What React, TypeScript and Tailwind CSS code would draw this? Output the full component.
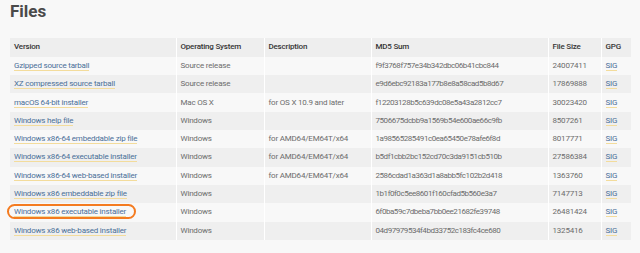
import React from "react";

type Row = {
  version: string;
  os: string;
  desc: string;
  md5: string;
  size: string;
  marked?: boolean;
};

const rows: Row[] = [
  { version: "Gzipped source tarball", os: "Source release", desc: "", md5: "f9f3768f757e34b342dbc06b41cbc844", size: "24007411" },
  { version: "XZ compressed source tarball", os: "Source release", desc: "", md5: "e9d6ebc92183a177b8e8a58cad5b8d67", size: "17869888" },
  { version: "macOS 64-bit installer", os: "Mac OS X", desc: "for OS X 10.9 and later", md5: "f12203128b5c639dc08e5a43a2812cc7", size: "30023420" },
  { version: "Windows help file", os: "Windows", desc: "", md5: "7506675dcbb9a1569b54e600ae66c9fb", size: "8507261" },
  { version: "Windows x86-64 embeddable zip file", os: "Windows", desc: "for AMD64/EM64T/x64", md5: "1a98565285491c0ea65450e78afe6f8d", size: "8017771" },
  { version: "Windows x86-64 executable installer", os: "Windows", desc: "for AMD64/EM64T/x64", md5: "b5df1cbb2bc152cd70c3da9151cb510b", size: "27586384" },
  { version: "Windows x86-64 web-based installer", os: "Windows", desc: "for AMD64/EM64T/x64", md5: "2586cdad1a363d1a8abb5fc102b2d418", size: "1363760" },
  { version: "Windows x86 embeddable zip file", os: "Windows", desc: "", md5: "1b1f0f0c5ee8601f160cfad5b560e3a7", size: "7147713" },
  { version: "Windows x86 executable installer", os: "Windows", desc: "", md5: "6f0ba59c7dbeba7bb0ee21682fe39748", size: "26481424", marked: true },
  { version: "Windows x86 web-based installer", os: "Windows", desc: "", md5: "04d97979534f4bd33752c183fc4ce680", size: "1325416" },
];

const Link: React.FC<{ children: React.ReactNode }> = ({ children }) => (
  <a href="#" className="text-[#4a6f99] border-b border-[#f3dc9c]">
    {children}
  </a>
);

const App: React.FC = () => {
  return (
    <div className="w-[640px] h-[253px] bg-[#f8f8f8] pl-[10px] pt-[1px] overflow-hidden font-['Roboto',sans-serif]">
      <h1 className="text-[17px] font-bold text-[#4a4a4a] leading-[20px] h-[37px]">Files</h1>
      <table className="table-fixed border-collapse w-[621px] text-[8px] text-[#6c6c6c] tracking-[-0.2px]">
        <colgroup>
          <col className="w-[166px]" />
          <col className="w-[88px]" />
          <col className="w-[107px]" />
          <col className="w-[177px]" />
          <col className="w-[53px]" />
          <col className="w-[30px]" />
        </colgroup>
        <thead>
          <tr className="h-[18.7px] bg-[#eeeeee] text-[#353535] text-left">
            <th className="font-medium px-[4px] border-r border-white">Version</th>
            <th className="font-medium px-[4px] border-x border-white">Operating System</th>
            <th className="font-medium px-[4px] border-x border-white">Description</th>
            <th className="font-medium px-[4px] border-x border-white">MD5 Sum</th>
            <th className="font-medium px-[4px] border-x border-white">File Size</th>
            <th className="font-medium px-[4px] border-l border-white">GPG</th>
          </tr>
        </thead>
        <tbody>
          {rows.map((r, i) => (
            <tr key={r.version} className={`h-[18.33px] ${i % 2 === 0 ? "bg-[#f8f8f8]" : "bg-[#efefef]"}`}>
              <td className="px-[4px] border-r border-white whitespace-nowrap">
                <span className="relative">
                  <Link>{r.version}</Link>
                  {r.marked && (
                    <span className="absolute -left-[7px] -right-[10px] -top-[3px] -bottom-[3px] border-2 border-[#f47b20] rounded-[8px]" />
                  )}
                </span>
              </td>
              <td className="px-[4px] border-x border-white whitespace-nowrap">{r.os}</td>
              <td className="px-[4px] border-x border-white whitespace-nowrap">{r.desc}</td>
              <td className="px-[4px] border-x border-white whitespace-nowrap tracking-[-0.45px]">{r.md5}</td>
              <td className="px-[4px] border-x border-white whitespace-nowrap">{r.size}</td>
              <td className="px-[4px] border-l border-white">
                <Link>SIG</Link>
              </td>
            </tr>
          ))}
        </tbody>
      </table>
    </div>
  );
};

export default App;
